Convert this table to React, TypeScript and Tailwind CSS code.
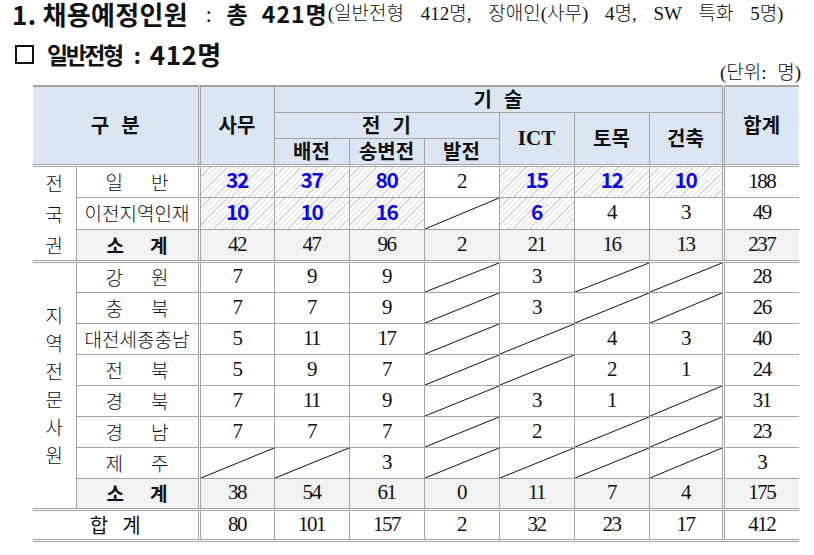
import React from "react";

const SANS = "font-['Noto_Sans_CJK_KR',sans-serif]";
const SERIF = "font-['Liberation_Serif','Noto_Sans_CJK_KR',serif]";

type Cell = number | "X" | { v: number; h: true };

const H = (v: number): Cell => ({ v, h: true });

const BORDER = "border border-[#a3a3a3]";
const DBL_L = "border-l-[3px] [border-left-style:double]";
const DBL_B = "border-b-[3px] [border-bottom-style:double]";
const HATCH =
  "bg-[repeating-linear-gradient(135deg,#ffffff_0px,#ffffff_3px,#cfcfcf_3px,#cfcfcf_4px)]";

function Diag() {
  return (
    <svg className="absolute inset-0 w-full h-full" preserveAspectRatio="none" viewBox="0 0 100 100">
      <line x1="0" y1="100" x2="100" y2="0" stroke="#111" strokeWidth="1" vectorEffect="non-scaling-stroke" />
    </svg>
  );
}

function Spaced({ chars, gap, className }: { chars: string[]; gap: string; className?: string }) {
  return (
    <div className={`flex justify-center ${gap} ${className ?? ""}`}>
      {chars.map((c, i) => (
        <span key={i}>{c}</span>
      ))}
    </div>
  );
}

function DataCells({ cells, bg, dblBottom }: { cells: Cell[]; bg?: string; dblBottom?: boolean }) {
  return (
    <>
      {cells.map((c, i) => {
        const cls = [
          BORDER,
          "relative p-0 text-center align-middle",
          i === 0 ? DBL_L : "",
          i === 7 ? DBL_L + " border-r-0" : "",
          dblBottom ? DBL_B : "",
        ];
        if (c === "X") {
          cls.push(bg ?? "bg-white");
          return (
            <td key={i} className={cls.join(" ")}>
              <Diag />
            </td>
          );
        }
        if (typeof c === "object") {
          cls.push(HATCH);
          return (
            <td key={i} className={cls.join(" ")}>
              <span className={`${SANS} font-bold text-[21px] tracking-[-1.5px] text-[#0a0ae6] leading-none`}>
                {c.v}
              </span>
            </td>
          );
        }
        cls.push(bg ?? "bg-white");
        return (
          <td key={i} className={cls.join(" ")}>
            <span className={`${SERIF} text-[21px] tracking-[-1.5px] text-[#111] leading-none`}>{c}</span>
          </td>
        );
      })}
    </>
  );
}

const regions: { name: string[]; gap: string; cells: Cell[] }[] = [
  { name: ["강", "원"], gap: "gap-[28px]", cells: [7, 9, 9, "X", 3, "X", "X", 28] },
  { name: ["충", "북"], gap: "gap-[28px]", cells: [7, 7, 9, "X", 3, "X", "X", 26] },
  { name: ["대전세종충남"], gap: "gap-0", cells: [5, 11, 17, "X", "X", 4, 3, 40] },
  { name: ["전", "북"], gap: "gap-[28px]", cells: [5, 9, 7, "X", "X", 2, 1, 24] },
  { name: ["경", "북"], gap: "gap-[28px]", cells: [7, 11, 9, "X", 3, 1, "X", 31] },
  { name: ["경", "남"], gap: "gap-[28px]", cells: [7, 7, 7, "X", 2, "X", "X", 23] },
  { name: ["제", "주"], gap: "gap-[28px]", cells: ["X", "X", 3, "X", "X", "X", "X", 3] },
];

const REGION_LABEL = ["지", "역", "전", "문", "사", "원"];

export default function App() {
  const hdr = `${BORDER} bg-[#dce6f2] p-0 text-center align-middle ${SANS} font-bold text-[20px] text-[#111] leading-none`;
  const label = `${SANS} font-light text-[19px] text-[#111] leading-[24px]`;
  return (
    <div className="w-[814px] h-[555px] bg-white text-[#111] overflow-hidden">
      <div className="pl-[12px] h-[27px] flex items-center whitespace-nowrap">
        <span className={`${SANS} font-bold text-[26px] tracking-[0.3px] leading-[27px]`}>1. 채용예정인원</span>
        <span className={`${SANS} text-[20px] ml-[18px] mr-[15px] leading-[27px]`}>:</span>
        <span className={`${SANS} font-bold text-[23px] tracking-[1px] [word-spacing:7px] leading-[27px]`}>총 421명</span>
        <span className={`${SERIF} font-light text-[19px] [word-spacing:12px] leading-[27px]`}>
          (일반전형 412명, 장애인(사무) 4명, SW 특화 5명)
        </span>
      </div>
      <div className="flex justify-between items-end pl-[15px] pr-[13px] h-[58px] pb-[3px]">
        <div className={`${SANS} font-bold self-start pt-[14px] flex items-center leading-[26px]`}>
          <span className="inline-block w-[19px] h-[19px] border-2 border-[#111] mr-[13px]"></span>
          <span className="text-[23px] tracking-[-2.5px]">일반전형</span>
          <span className="text-[22px] ml-[12px] mr-[9px]">:</span>
          <span className="text-[26px] tracking-[0.5px]">412명</span>
        </div>
        <div className={`${SERIF} font-light text-[19px] [word-spacing:6px] leading-none`}>(단위: 명)</div>
      </div>
      <div className="pl-[33px]">
        <table className="border-collapse table-fixed w-[766px]">
          <colgroup>
            <col className="w-[43px]" />
            <col className="w-[123px]" />
            <col className="w-[75px]" />
            <col className="w-[75px]" />
            <col className="w-[75px]" />
            <col className="w-[75px]" />
            <col className="w-[75px]" />
            <col className="w-[75px]" />
            <col className="w-[74px]" />
            <col className="w-[76px]" />
          </colgroup>
          <thead>
            <tr className="h-[26px]">
              <th colSpan={2} rowSpan={3} className={`${hdr} border-l-0 border-t-2 ${DBL_B}`}>
                <Spaced chars={["구", "분"]} gap="gap-[12px]" />
              </th>
              <th rowSpan={3} className={`${hdr} border-t-2 ${DBL_L} ${DBL_B}`}>사무</th>
              <th colSpan={6} className={`${hdr} border-t-2`}>
                <Spaced chars={["기", "술"]} gap="gap-[12px]" />
              </th>
              <th rowSpan={3} className={`${hdr} border-t-2 border-r-0 ${DBL_L} ${DBL_B}`}>합계</th>
            </tr>
            <tr className="h-[26px]">
              <th colSpan={3} className={hdr}>
                <Spaced chars={["전", "기"]} gap="gap-[12px]" />
              </th>
              <th rowSpan={2} className={`${hdr} ${DBL_B}`}>
                <span className={`${SERIF} font-bold text-[21px]`}>ICT</span>
              </th>
              <th rowSpan={2} className={`${hdr} ${DBL_B}`}>토목</th>
              <th rowSpan={2} className={`${hdr} ${DBL_B}`}>건축</th>
            </tr>
            <tr className="h-[27px]">
              <th className={`${hdr} ${DBL_B}`}>배전</th>
              <th className={`${hdr} ${DBL_B}`}>송변전</th>
              <th className={`${hdr} ${DBL_B}`}>발전</th>
            </tr>
          </thead>
          <tbody>
            <tr className="h-[31px]">
              <td rowSpan={3} className={`${BORDER} border-l-0 ${DBL_B} p-0 text-center align-middle`}>
                <div className={`${SANS} font-light text-[19px] flex flex-col items-center leading-[31px]`}>
                  <span>전</span>
                  <span>국</span>
                  <span>권</span>
                </div>
              </td>
              <td className={`${BORDER} p-0 text-center align-middle`}>
                <Spaced chars={["일", "반"]} gap="gap-[28px]" className={label} />
              </td>
              <DataCells cells={[H(32), H(37), H(80), 2, H(15), H(12), H(10), 188]} />
            </tr>
            <tr className="h-[31px]">
              <td className={`${BORDER} p-0 text-center align-middle`}>
                <div className={label}>이전지역인재</div>
              </td>
              <DataCells cells={[H(10), H(10), H(16), "X", H(6), 4, 3, 49]} />
            </tr>
            <tr className="h-[31px]">
              <td className={`${BORDER} ${DBL_B} p-0 text-center align-middle bg-[#f2f2f2]`}>
                <Spaced chars={["소", "계"]} gap="gap-[26px]" className={`${SANS} font-bold text-[19px] leading-[24px]`} />
              </td>
              <DataCells cells={[42, 47, 96, 2, 21, 16, 13, 237]} bg="bg-[#f2f2f2]" dblBottom />
            </tr>
            {regions.map((r, idx) => (
              <tr key={idx} className="h-[31px]">
                {idx === 0 && (
                  <td rowSpan={8} className={`${BORDER} border-l-0 ${DBL_B} p-0 text-center align-middle`}>
                    <div className={`${SANS} font-light text-[19px] flex flex-col items-center leading-[28px]`}>
                      {REGION_LABEL.map((c, i) => (
                        <span key={i}>{c}</span>
                      ))}
                    </div>
                  </td>
                )}
                <td className={`${BORDER} p-0 text-center align-middle`}>
                  <Spaced chars={r.name} gap={r.gap} className={label} />
                </td>
                <DataCells cells={r.cells} />
              </tr>
            ))}
            <tr className="h-[31px]">
              <td className={`${BORDER} ${DBL_B} p-0 text-center align-middle bg-[#f2f2f2]`}>
                <Spaced chars={["소", "계"]} gap="gap-[26px]" className={`${SANS} font-bold text-[19px] leading-[24px]`} />
              </td>
              <DataCells cells={[38, 54, 61, 0, 11, 7, 4, 175]} bg="bg-[#f2f2f2]" dblBottom />
            </tr>
            <tr className="h-[31px]">
              <td colSpan={2} className={`${BORDER} border-l-0 ${DBL_B} p-0 text-center align-middle`}>
                <Spaced chars={["합", "계"]} gap="gap-[14px]" className={`${SANS} text-[20px] leading-[24px]`} />
              </td>
              <DataCells cells={[80, 101, 157, 2, 32, 23, 17, 412]} dblBottom />
            </tr>
          </tbody>
        </table>
      </div>
    </div>
  );
}
